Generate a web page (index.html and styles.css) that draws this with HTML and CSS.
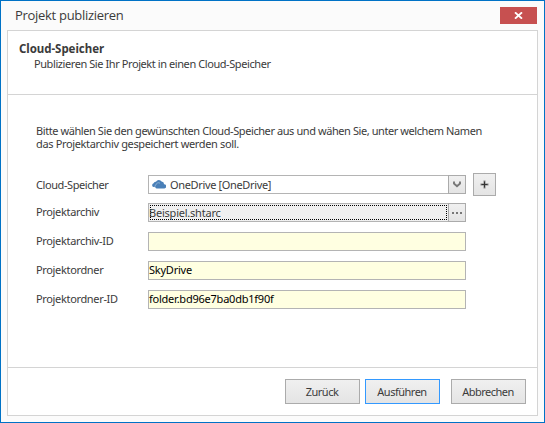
FILE: index.html
```html
<!DOCTYPE html>
<html lang="de">
<head>
<meta charset="utf-8">
<title>Projekt publizieren</title>
<link rel="stylesheet" href="styles.css">
</head>
<body>
<div class="window">
  <header class="titlebar">
    <h1 class="title">Projekt publizieren</h1>
    <button class="close" aria-label="Schließen">
      <svg width="9" height="7" viewBox="0 0 9 7"><path d="M1 .4 8 6.6M8 .4 1 6.6" stroke="#fff" stroke-width="1.9" fill="none"/></svg>
    </button>
  </header>
  <main class="panel">
    <section class="intro">
      <h2 class="heading">Cloud-Speicher</h2>
      <p class="subtitle">Publizieren Sie Ihr Projekt in einen Cloud-Speicher</p>
    </section>
    <section class="content">
      <div class="hint">
        <p>Bitte wählen Sie den gewünschten Cloud-Speicher aus und wähen Sie, unter welchem Namen</p>
        <p class="hint-end">das Projektarchiv gespeichert werden soll.</p>
      </div>
      <div class="form">
        <div class="row first">
          <label>Cloud-Speicher</label>
          <div class="field combo">
            <svg class="cloud" width="14" height="9" viewBox="0 0 14 9"><path d="M1.6 7A1.9 1.9 0 0 1 1.6 3.3 2.2 2.2 0 0 1 4 1.8 3.2 3.2 0 0 1 9.6 1.6 2.6 2.6 0 0 1 12 4.3 2 2 0 0 1 12.4 8.4H4.6A2 2 0 0 1 3 7Z" fill="#4a80b8"/><path d="M3.6 8A1.9 1.9 0 0 1 4 4.8 2.6 2.6 0 0 1 8 3.2" fill="none" stroke="#b5cce4" stroke-width=".6"/></svg>
            <span class="value">OneDrive [OneDrive]</span>
            <button class="inner" aria-label="Auswahl">
              <svg width="8" height="7" viewBox="0 0 8 7"><path d="M1 .5V2.5L4 5.2 7 2.5V.5" stroke="#777" stroke-width="1.9" fill="none"/></svg>
            </button>
          </div>
          <button class="plus" aria-label="Hinzufügen">
            <svg width="9" height="9" viewBox="0 0 9 9"><path d="M.5 4.5H8.5M4.5 .5V8.5" stroke="#888" stroke-width="2"/><path d="M1.5 4.5H7.5M4.5 1.5V7.5" stroke="#333" stroke-width="1"/></svg>
          </button>
        </div>
        <div class="row">
          <label class="loose">Projektarchiv</label>
          <div class="field picker">
            <span class="focus"><span>Beispiel.shtarc</span></span>
            <button class="inner" aria-label="Durchsuchen">
              <svg width="10" height="2" viewBox="0 0 10 2"><path d="M0 0h2v2H0zM4 0h2v2H4zM8 0h2v2H8z" fill="#777"/></svg>
            </button>
          </div>
        </div>
        <div class="row">
          <label class="loose">Projektarchiv-ID</label>
          <div class="field readonly"></div>
        </div>
        <div class="row">
          <label class="loose">Projektordner</label>
          <div class="field readonly">SkyDrive</div>
        </div>
        <div class="row">
          <label class="loose">Projektordner-ID</label>
          <div class="field readonly">folder.bd96e7ba0db1f90f</div>
        </div>
      </div>
    </section>
    <footer class="actions">
      <button class="btn">Zurück</button>
      <button class="btn primary">Ausführen</button>
      <button class="btn cancel">Abbrechen</button>
    </footer>
  </main>
</div>
</body>
</html>
```
FILE: styles.css
```css
* { box-sizing: border-box; }

body {
  margin: 0;
  font: 11px/13px "Noto Sans", "Open Sans", sans-serif;
  letter-spacing: -0.42px;
  color: #3b3b3b;
}

h1, h2, p { margin: 0; font-weight: normal; }

button {
  display: flex;
  align-items: center;
  justify-content: center;
  padding: 0;
  font: inherit;
  letter-spacing: inherit;
  color: inherit;
  border: 1px solid #ababab;
  background: linear-gradient(#f0f0f0, #e4e4e4);
}

svg { display: block; flex: none; }

.window {
  display: flex;
  flex-direction: column;
  width: 545px;
  height: 423px;
  padding: 0 6px 6px;
  border: 1px solid #0072c6;
  background: #fbfbfb;
}

.titlebar {
  display: flex;
  justify-content: space-between;
  height: 29px;
  padding: 6px 1px 0 8px;
}

.title {
  font: 13px/17px "Open Sans", "Noto Sans", sans-serif;
  letter-spacing: -0.3px;
  white-space: nowrap;
}

.close {
  width: 37px;
  height: 17px;
  border: 0;
  background: #c75050;
}

.panel {
  flex: 1;
  display: flex;
  flex-direction: column;
  border: 1px solid #d4d4d4;
  background: #fff;
}

.intro {
  height: 64px;
  padding: 11px 0 0 11px;
  border-bottom: 1px solid #d4d4d4;
}

.heading {
  font-size: 11.5px;
  line-height: 13px;
  font-weight: bold;
  letter-spacing: -0.05px;
}

.subtitle {
  padding: 2px 0 0 15px;
  white-space: nowrap;
}

.content {
  flex: 1;
  padding: 29px 0 0 28px;
}

.hint { white-space: nowrap; }
.hint-end { letter-spacing: -0.35px; }

.form {
  display: flex;
  flex-direction: column;
  gap: 10px;
  margin-top: 23px;
}

.row {
  display: flex;
  align-items: center;
  height: 19px;
}

.row label {
  width: 112px;
  padding-bottom: 2px;
  white-space: nowrap;
}

.first {
  height: 23px;
  margin-bottom: -3px;
}

.first label { padding-bottom: 0; }

.row .loose { letter-spacing: -0.34px; }

.field {
  display: flex;
  align-items: center;
  width: 318px;
  height: 19px;
  border: 1px solid #b4b4b4;
  white-space: nowrap;
}

.combo { padding-left: 3px; }

.value {
  flex: 1;
  padding-left: 4px;
  letter-spacing: -0.35px;
}

.inner {
  width: 18px;
  height: 19px;
  margin: 0 -1px 0 auto;
}

.plus {
  width: 23px;
  height: 23px;
  margin-left: 7px;
}

.picker { background: #f0f0f0; }

.focus {
  display: flex;
  align-items: center;
  width: 297px;
  height: 15px;
  margin-left: 1px;
  border: 1px dotted #000;
  letter-spacing: -0.22px;
}

.focus span { margin-left: -2px; }

.readonly {
  padding: 0 0 2px;
  color: #000;
  background: #ffffe1;
  letter-spacing: -0.23px;
}

.actions {
  display: flex;
  justify-content: flex-end;
  gap: 5px;
  height: 48px;
  padding: 11px 11px 0 0;
  border-top: 1px solid #d4d4d4;
}

.btn {
  width: 75px;
  height: 25px;
  padding-right: 1px;
  letter-spacing: -0.5px;
}

.primary { border-color: #3399ff; }
.cancel { margin-left: 6px; }
```
